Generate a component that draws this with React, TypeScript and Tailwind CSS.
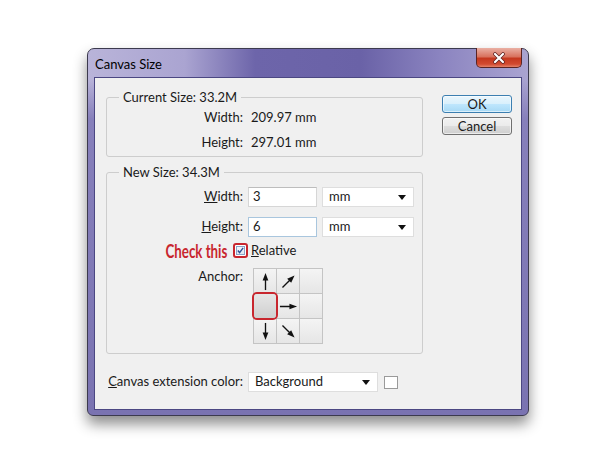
import React from 'react';

const Arrow = ({ rot }: { rot: string }) => (
  <svg viewBox="0 0 20 20" className={`w-[19px] h-[19px] ${rot}`}>
    <line x1="10" y1="19" x2="10" y2="7" stroke="#111" strokeWidth="1.4" />
    <polygon points="10,1 7,9 13,9" fill="#111" />
  </svg>
);

const Caret = () => (
  <svg viewBox="0 0 8 5" className="w-[8px] h-[5px]">
    <polygon points="0,0 8,0 4,5" fill="#111" />
  </svg>
);

const Select = ({ value, width }: { value: string; width: string }) => (
  <div className={`${width} h-[20px] bg-white border border-[#dedede] flex items-center justify-between pl-[6px] pr-[7px]`}>
    <span>{value}</span>
    <Caret />
  </div>
);

const Cell = ({ children, selected }: { children?: React.ReactNode; selected?: boolean }) => (
  <div
    className={
      selected
        ? 'relative z-10 flex items-center justify-center bg-[linear-gradient(180deg,#e6e6e6,#cfcfcf)] ring-2 ring-[#c8262e] rounded-[3px]'
        : 'flex items-center justify-center bg-[linear-gradient(180deg,#f4f4f4,#e6e6e6)]'
    }
  >
    {children}
  </div>
);

export default function App() {
  return (
    <div className="w-[600px] h-[465px] bg-white pl-[87px] pt-[48px] font-[Lato,sans-serif] text-[13px] text-[#1a1a1a]">
      <div className="w-[442px] h-[368px] flex flex-col rounded-t-[7px] rounded-b-[6px] border border-[#3c3a4e] px-[6px] pb-[5px] shadow-[0_8px_14px_rgba(0,0,0,0.45)] bg-[linear-gradient(180deg,rgba(120,112,178,0)_0px,rgba(120,112,178,0)_30px,#8780bb_70px,#7a73b1_100%),linear-gradient(90deg,#b9b4d9_0%,#aaa4d1_22%,#6d65aa_38%,#6a62a7_62%,#8b84c0_80%,#aaa4d1_100%)]">
        {/* title bar */}
        <div className="h-[28px] flex items-start justify-between">
          <span className="mt-[6px] pl-[1px] text-black">Canvas Size</span>
          <button className="-mt-px w-[46px] h-[20px] flex items-center justify-center rounded-b-[5px] border border-t-0 border-[#5a2424] bg-[linear-gradient(180deg,#eab0a4_0%,#d9735f_45%,#c5381f_55%,#d24a30_85%,#e5826a_100%)]">
            <svg viewBox="0 0 12 12" className="w-[12px] h-[12px]">
              <path d="M2 2 L10 10 M10 2 L2 10" stroke="#5b2020" strokeWidth="3.6" strokeLinecap="round" />
              <path d="M2 2 L10 10 M10 2 L2 10" stroke="#fff" strokeWidth="2.2" strokeLinecap="round" />
            </svg>
          </button>
        </div>

        {/* client area */}
        <div className="flex-1 bg-[#f0f0f0] border border-[#4b4782] flex items-start pl-[11px]">
          <div className="w-[317px] mt-[11px]">
            <fieldset className="border border-[#cdcdcd] rounded-[3px] pb-[1px]">
              <legend className="ml-[12px] px-[4px] leading-[16px]">Current Size: 33.2M</legend>
              <div className="grid grid-cols-[136px_1fr] gap-x-[8px]">
                <div className="h-[25px] flex items-center justify-end">Width:</div>
                <div className="h-[25px] flex items-center">209.97 mm</div>
                <div className="h-[25px] flex items-center justify-end">Height:</div>
                <div className="h-[25px] flex items-center">297.01 mm</div>
              </div>
            </fieldset>

            <fieldset className="mt-[7px] border border-[#cdcdcd] rounded-[3px] pt-[7px] pb-[9px]">
              <legend className="ml-[12px] px-[4px] leading-[16px]">New Size: 34.3M</legend>
              <div className="flex items-center h-[20px]">
                <span className="w-[136px] text-right"><u>W</u>idth:</span>
                <div className="ml-[5px] w-[69px] h-[20px] bg-white border border-[#d6d6d6] border-t-[#bdbdbd] pl-[4px] flex items-center">3</div>
                <div className="ml-[5px]"><Select value="mm" width="w-[92px]" /></div>
              </div>
              <div className="mt-[10px] flex items-center h-[20px]">
                <span className="w-[136px] text-right"><u>H</u>eight:</span>
                <div className="ml-[5px] w-[69px] h-[20px] bg-white border border-[#a9c6de] pl-[4px] flex items-center">6</div>
                <div className="ml-[5px]"><Select value="mm" width="w-[92px]" /></div>
              </div>
              <div className="mt-[6px] flex items-center h-[15px]">
                <span className="w-[126px] pr-[6px] flex justify-end">
                  <span className="inline-block origin-right scale-x-[0.7] font-bold text-[19px] leading-[15px] text-[#c8262e] whitespace-nowrap">
                    Check this
                  </span>
                </span>
                <div className="w-[15px] h-[15px] rounded-[3px] border-2 border-[#c8262e] flex items-center justify-center bg-white">
                  <div className="w-[9px] h-[9px] border border-[#8aa4c8] bg-[linear-gradient(180deg,#f4f6fa,#dfe6f0)] flex items-center justify-center">
                    <svg viewBox="0 0 8 8" className="w-[7px] h-[7px]">
                      <path d="M1 4 L3 6.5 L7 1" fill="none" stroke="#2b4f94" strokeWidth="1.6" />
                    </svg>
                  </div>
                </div>
                <span className="ml-[3px]"><u>R</u>elative</span>
              </div>
              <div className="mt-[10px] flex items-start">
                <span className="w-[136px] text-right leading-[16px]">Anchor:</span>
                <div className="ml-[10px] grid grid-cols-[22px_22px_22px] grid-rows-[24px_24px_24px] gap-px bg-[#c4c4c4] border border-[#c4c4c4]">
                  <Cell><Arrow rot="" /></Cell>
                  <Cell><Arrow rot="rotate-45" /></Cell>
                  <Cell />
                  <Cell selected />
                  <Cell><Arrow rot="rotate-90" /></Cell>
                  <Cell />
                  <Cell><Arrow rot="rotate-180" /></Cell>
                  <Cell><Arrow rot="rotate-[135deg]" /></Cell>
                  <Cell />
                </div>
              </div>
            </fieldset>

            <div className="mt-[18px] flex items-center pl-px">
              <span className="w-[136px] text-right"><u>C</u>anvas extension color:</span>
              <div className="ml-[5px]"><Select value="Background" width="w-[130px]" /></div>
              <div className="ml-[6px] w-[14px] h-[13px] bg-white border border-[#9a9a9a]" />
            </div>
          </div>

          <div className="ml-[19px] mt-[17px] w-[70px] flex flex-col gap-[4px]">
            <button className="h-[18px] rounded-[3px] border border-[#3c7fb1] bg-[linear-gradient(180deg,#eaf6fd_0%,#d9f0fc_48%,#bee6fd_52%,#a7d9f5_100%)] shadow-[inset_0_0_0_1px_rgba(255,255,255,0.6)] flex items-center justify-center leading-none">
              OK
            </button>
            <button className="h-[18px] rounded-[3px] border border-[#707070] bg-[linear-gradient(180deg,#f2f2f2_0%,#ebebeb_48%,#dddddd_52%,#cfcfcf_100%)] shadow-[inset_0_0_0_1px_rgba(255,255,255,0.6)] flex items-center justify-center leading-none">
              Cancel
            </button>
          </div>
        </div>
      </div>
    </div>
  );
}
